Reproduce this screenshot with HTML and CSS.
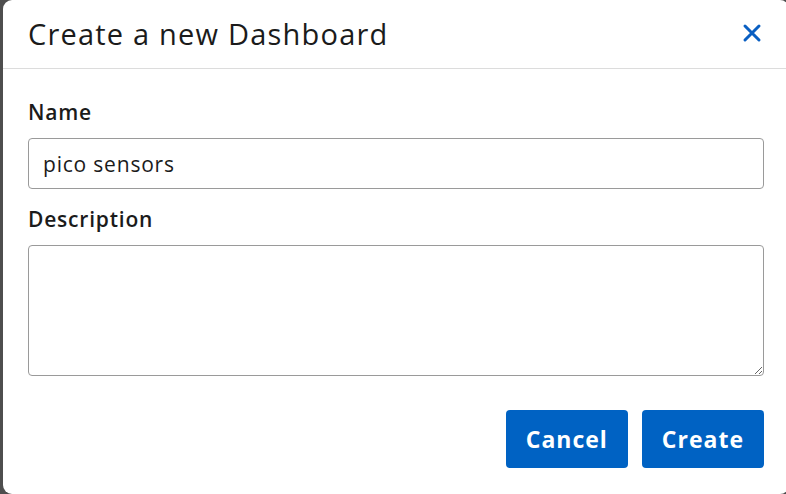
FILE: index.html
```html
<!DOCTYPE html>
<html lang="en">
<head>
    <meta charset="utf-8">
    <title>Create a new Dashboard</title>
    <link rel="stylesheet" href="styles.css">
</head>
<body>

<div class="modal">
    <div class="modal-header">
        <h1 class="modal-title">Create a new Dashboard</h1>
        <button class="close" type="button" aria-label="Close">
            <svg width="20" height="20" viewBox="0 0 20 20">
                <path d="M3 3 L17 17 M17 3 L3 17" stroke="#0a5fc2" stroke-width="3" stroke-linecap="round"/>
            </svg>
        </button>
    </div>
    <div class="modal-body">
        <label class="field-label" for="name">Name</label>
        <input class="field-input" id="name" type="text" value="pico sensors">
        <label class="field-label" for="description">Description</label>
        <textarea class="field-textarea" id="description"></textarea>
    </div>
    <div class="modal-footer">
        <button class="btn" type="button">Cancel</button>
        <button class="btn" type="button">Create</button>
    </div>
</div>

</body>
</html>
```
FILE: styles.css
```css
* {
    margin: 0;
    padding: 0;
    box-sizing: border-box;
}

body {
    background-color: #4e4e4e;
    font-family: "Open Sans", "Liberation Sans", sans-serif;
    color: #1b1b1b;
    overflow: hidden;
}

.modal {
    margin-left: 3px;
    width: 786px;
    height: 494px;
    background-color: white;
    border-radius: 9px;
}

.modal-header {
    display: flex;
    align-items: center;
    justify-content: space-between;
    height: 69px;
    padding: 0 25px 0 25px;
    border-bottom: 1px solid #dcdcdc;
}

.modal-title {
    font-size: 29px;
    font-weight: normal;
    letter-spacing: 1.2px;
    padding-bottom: 2px;
}

.close {
    display: flex;
    border: none;
    background: none;
    margin-right: 2px;
    margin-bottom: 2px;
}

.modal-body {
    display: flex;
    flex-direction: column;
    padding: 0 25px;
}

.field-label {
    font-size: 21px;
    font-weight: 600;
    letter-spacing: 0.8px;
    line-height: 24px;
    margin-top: 31px;
    margin-bottom: 14px;
}

.field-input + .field-label {
    margin-top: 18px;
}

.field-input {
    height: 51px;
    padding: 0 14px;
    border: 1px solid #9a9a9a;
    border-radius: 4px;
    font-family: inherit;
    font-size: 21px;
    letter-spacing: 0.8px;
    color: #1b1b1b;
}

.field-textarea {
    height: 131px;
    border: 1px solid #9a9a9a;
    border-radius: 4px;
    font-family: inherit;
    font-size: 20px;
    resize: vertical;
}

.modal-footer {
    display: flex;
    justify-content: flex-end;
    gap: 14px;
    padding: 34px 25px 0 25px;
}

.btn {
    height: 58px;
    padding: 0 20px;
    border: none;
    border-radius: 4px;
    background-color: #0062c3;
    color: white;
    font-family: inherit;
    font-size: 23px;
    font-weight: bold;
    letter-spacing: 1px;
}
```
